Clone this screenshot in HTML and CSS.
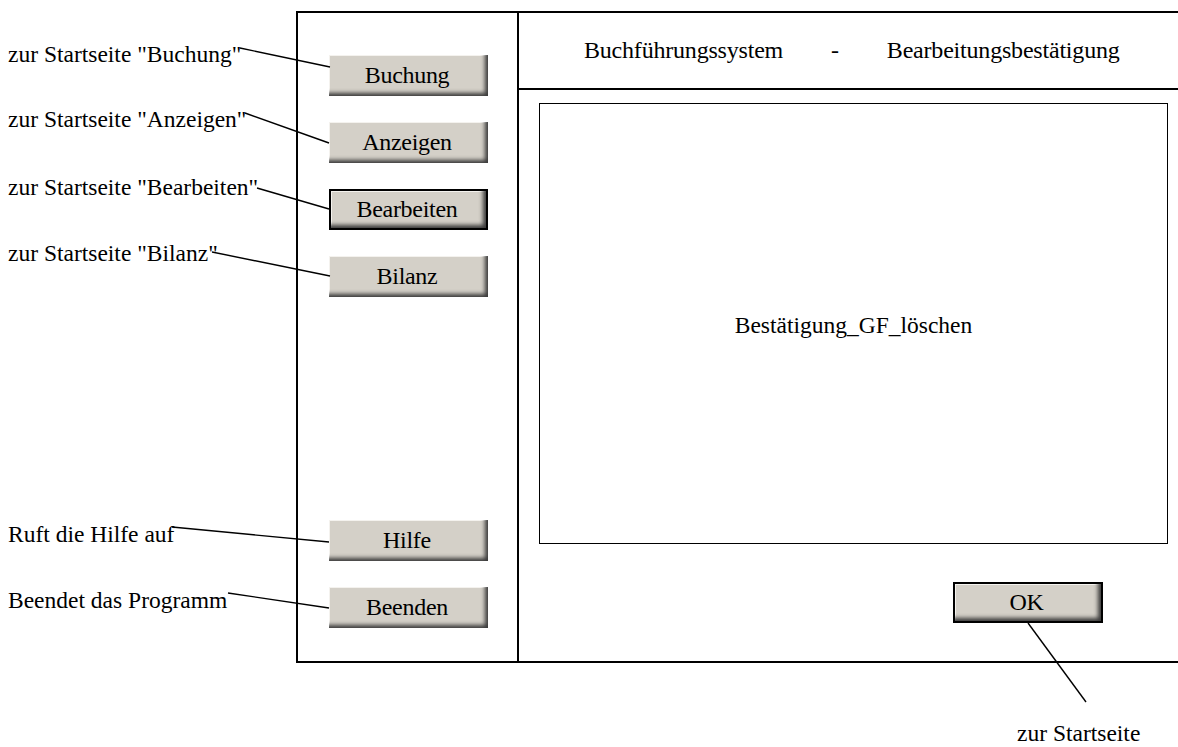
FILE: index.html
```html
<!DOCTYPE html>
<html>
<head>
	<meta charset="utf-8">
	<title>Buchführungssystem - Bearbeitungsbestätigung</title>
	<link rel="stylesheet" href="styles.css">
</head>
<body>
<div class="page">

	<div class="frame">
		<div class="sidebar">
			<div class="nav-group">
				<button class="btn">Buchung</button>
				<button class="btn">Anzeigen</button>
				<button class="btn btn-active">Bearbeiten</button>
				<button class="btn">Bilanz</button>
			</div>
			<div class="nav-group">
				<button class="btn">Hilfe</button>
				<button class="btn">Beenden</button>
			</div>
		</div>
		<div class="main">
			<div class="title-bar">
				<span>Buchführungssystem</span>
				<span class="dash">-</span>
				<span>Bearbeitungsbestätigung</span>
			</div>
			<div class="content">
				<div class="message-box">Bestätigung_GF_löschen</div>
				<div class="actions">
					<button class="btn btn-ok">OK</button>
				</div>
			</div>
		</div>
	</div>

	<!-- Beschriftungen -->
	<div class="note" style="left: 8px; top: 43px;">zur Startseite "Buchung"</div>
	<div class="note" style="left: 8px; top: 108px;">zur Startseite "Anzeigen"</div>
	<div class="note" style="left: 8px; top: 176px;">zur Startseite "Bearbeiten"</div>
	<div class="note" style="left: 8px; top: 242px;">zur Startseite "Bilanz"</div>
	<div class="note" style="left: 8px; top: 523px;">Ruft die Hilfe auf</div>
	<div class="note" style="left: 8px; top: 589px;">Beendet das Programm</div>
	<div class="note" style="left: 1017px; top: 722px;">zur Startseite</div>

	<svg class="leaders" width="1178" height="747" viewBox="0 0 1178 747">
		<g stroke="#000" stroke-width="1.4" fill="none">
			<line x1="240" y1="48" x2="330" y2="67"/>
			<line x1="245" y1="113" x2="329" y2="143"/>
			<line x1="257" y1="188" x2="329" y2="209"/>
			<line x1="212" y1="252" x2="330" y2="276"/>
			<line x1="172" y1="527" x2="329" y2="542"/>
			<line x1="228" y1="593" x2="329" y2="608"/>
			<line x1="1028" y1="623" x2="1086" y2="702"/>
		</g>
	</svg>

</div>
</body>
</html>
```

FILE: styles.css
```css
body {
    margin: 0;
    font-family: "Liberation Serif", "Times New Roman", serif;
    color: #000;
    background: #fff;
}

.page {
    position: relative;
    width: 1178px;
    height: 747px;
    overflow: hidden;
}

.frame {
    display: flex;
    margin: 11px 0 0 296px;
    width: 900px;
    height: 648px;
    border: 2px solid #000;
}

.sidebar {
    width: 221px;
    border-right: 2px solid #000;
    display: flex;
    flex-direction: column;
    justify-content: space-between;
    padding: 42px 0 33px 31px;
    box-sizing: border-box;
}

.nav-group {
    display: flex;
    flex-direction: column;
    gap: 26px;
}

.btn {
    width: 159px;
    height: 41px;
    padding: 0 3px 0 0;
    font-family: "Liberation Serif", "Times New Roman", serif;
    font-size: 24px;
    letter-spacing: -0.3px;
    color: #000;
    background: #d4d0c8;
    border: none;
    box-shadow: inset -5px -5px 4px -2px #3a3a3a, inset 1px 1px 0 #f4f2ee;
    cursor: pointer;
}

.btn-active {
    border: 2px solid #000;
}

.main {
    flex: 1;
    display: flex;
    flex-direction: column;
}

.title-bar {
    height: 77px;
    border-bottom: 2px solid #000;
    display: flex;
    align-items: flex-start;
    padding: 25px 0 0 65px;
    box-sizing: border-box;
    font-size: 24px;
    line-height: 1;
    letter-spacing: -0.2px;
}

.title-bar .dash {
    margin: 0 48px;
}

.content {
    flex: 1;
    padding: 13px 0 0 20px;
}

.message-box {
    width: 629px;
    height: 441px;
    border: 1px solid #000;
    display: flex;
    align-items: center;
    justify-content: center;
    padding-top: 4px;
    box-sizing: border-box;
    font-size: 23.5px;
    line-height: 1;
}

.actions {
    padding: 38px 0 0 414px;
}

.btn-ok {
    width: 150px;
    border: 2px solid #000;
}

.note {
    position: absolute;
    font-size: 23.5px;
    line-height: 1;
    white-space: nowrap;
}

.leaders {
    position: absolute;
    left: 0;
    top: 0;
    pointer-events: none;
}
```
